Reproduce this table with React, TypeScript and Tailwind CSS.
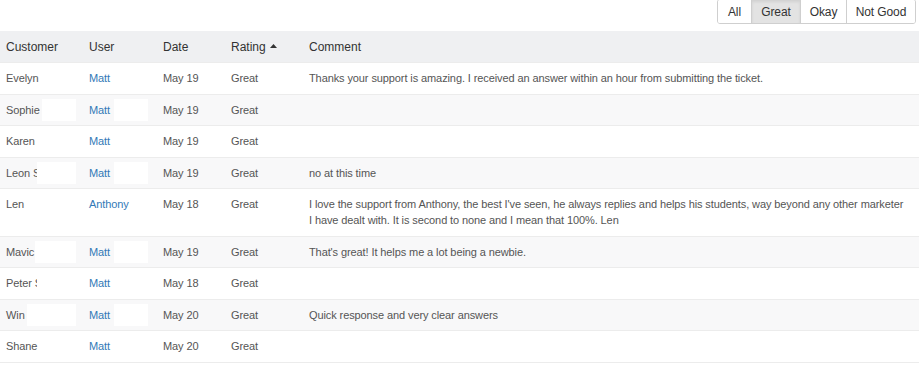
import React from 'react';

type Row = {
  customer: string;
  // white box that hides the surname (x from, x to)
  mask?: [number, number];
  user: string;
  userMask?: boolean;
  date: string;
  rating: string;
  comment?: string;
};

const rows: Row[] = [
  {
    customer: 'Evelyn A',
    mask: [39, 76],
    user: 'Matt',
    date: 'May 19',
    rating: 'Great',
    comment: 'Thanks your support is amazing. I received an answer within an hour from submitting the ticket.',
  },
  { customer: 'Sophie', mask: [42, 76], user: 'Matt', userMask: true, date: 'May 19', rating: 'Great' },
  { customer: 'Karen', user: 'Matt', date: 'May 19', rating: 'Great' },
  { customer: 'Leon S', mask: [37, 76], user: 'Matt', userMask: true, date: 'May 19', rating: 'Great', comment: 'no at this time' },
  {
    customer: 'Len',
    user: 'Anthony',
    date: 'May 18',
    rating: 'Great',
    comment:
      "I love the support from Anthony, the best I've seen, he always replies and helps his students, way beyond any other marketer I have dealt with. It is second to none and I mean that 100%. Len",
  },
  { customer: 'Mavic', mask: [35, 76], user: 'Matt', userMask: true, date: 'May 19', rating: 'Great', comment: "That's great! It helps me a lot being a newbie." },
  { customer: 'Peter S', mask: [37, 76], user: 'Matt', date: 'May 18', rating: 'Great' },
  { customer: 'Win', mask: [27, 76], user: 'Matt', userMask: true, date: 'May 20', rating: 'Great', comment: 'Quick response and very clear answers' },
  { customer: 'Shane', user: 'Matt', date: 'May 20', rating: 'Great' },
];

const filters = [
  { label: 'All', w: 'w-[33px]' },
  { label: 'Great', w: 'w-[49px]', active: true },
  { label: 'Okay', w: 'w-[46px]' },
  { label: 'Not Good', w: 'w-[69px]' },
];

export default function App() {
  return (
    <div className="w-[919px] h-[366px] overflow-hidden bg-white font-['Liberation_Sans',Arial,sans-serif]">
      {/* Rating filter */}
      <div className="flex justify-end pr-[3px] h-[31px]">
        <div className="flex h-[25px] -mt-[1px] border border-[#cfcfcf] rounded-[3px] overflow-hidden">
          {filters.map((f, i) => (
            <div
              key={f.label}
              className={`${f.w} flex items-center justify-center text-[12px] tracking-[-0.1px] text-[#333] ${i > 0 ? 'border-l border-[#cfcfcf]' : ''} ${
                f.active ? 'bg-[#e3e3e3] shadow-[inset_0_2px_3px_rgba(0,0,0,0.08)]' : 'bg-white'
              }`}
            >
              {f.label}
            </div>
          ))}
        </div>
      </div>

      {/* Table */}
      <div className="grid grid-cols-[83px_74px_68px_78px_1fr]">
        <div className="contents text-[12px] text-[#333]">
          <div className="bg-[#eff0f2] h-[31px] pl-[6px] flex items-center">Customer</div>
          <div className="bg-[#eff0f2] h-[31px] pl-[6px] flex items-center">User</div>
          <div className="bg-[#eff0f2] h-[31px] pl-[6px] flex items-center">Date</div>
          <div className="bg-[#eff0f2] h-[31px] pl-[6px] flex items-center gap-[4px]">
            Rating
            <svg width="7" height="4" viewBox="0 0 7 4" className="mt-[-1px]">
              <path d="M0 4 L3.5 0 L7 4 Z" fill="#333" />
            </svg>
          </div>
          <div className="bg-[#eff0f2] h-[31px] pl-[6px] flex items-center">Comment</div>
        </div>

        {rows.map((r, i) => {
          const bg = i % 2 === 1 ? 'bg-[#f8f8f9]' : 'bg-white';
          const last = i === rows.length - 1 ? 'border-b' : '';
          const cell = `${bg} ${last} border-t border-[#ececec] py-[7.25px] pl-[6px] text-[11px] tracking-[-0.1px] leading-[16px] text-[#555]`;
          return (
            <div key={i} className="contents">
              <div className={`${cell} relative whitespace-nowrap overflow-hidden`}>
                {r.customer}
                {r.mask && (
                  <span
                    className="absolute top-[4px] bottom-[4px] bg-white"
                    style={{ left: r.mask[0], width: r.mask[1] - r.mask[0] }}
                  />
                )}
              </div>
              <div className={`${cell} relative`}>
                <span className="text-[#337ab7]">{r.user}</span>
                {r.userMask && <span className="absolute top-[4px] bottom-[4px] left-[31px] w-[34px] bg-white" />}
              </div>
              <div className={cell}>{r.date}</div>
              <div className={cell}>{r.rating}</div>
              <div className={`${cell} pr-[10px]`}>{r.comment}</div>
            </div>
          );
        })}
      </div>
    </div>
  );
}
